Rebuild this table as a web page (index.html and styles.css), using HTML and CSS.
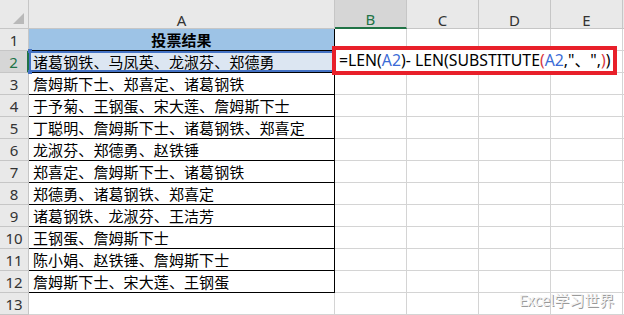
FILE: index.html
```html
<!DOCTYPE html>
<html lang="zh-CN">
<head>
<meta charset="utf-8">
<link rel="stylesheet" href="styles.css">
</head>
<body>
<div class="sheet">
  <div class="hd corner"><span class="tri"></span></div>
  <div class="hd col">A</div>
  <div class="hd col sel-col">B</div>
  <div class="hd col">C</div>
  <div class="hd col">D</div>
  <div class="hd col">E</div>
  <div class="hd col"></div>

  <div class="hd rn">1</div>
  <div class="c a title">投票结果</div>
  <div class="c"></div><div class="c"></div><div class="c"></div><div class="c"></div><div class="c"></div>

  <div class="hd rn sel-row">2</div>
  <div class="c a ref">诸葛钢铁、马凤英、龙淑芬、郑德勇<span class="h h1"></span><span class="h h2"></span></div>
  <div class="c active"></div><div class="c"></div><div class="c"></div><div class="c"></div><div class="c"></div>

  <div class="hd rn">3</div>
  <div class="c a">詹姆斯下士、郑喜定、诸葛钢铁</div>
  <div class="c"></div><div class="c"></div><div class="c"></div><div class="c"></div><div class="c"></div>

  <div class="hd rn">4</div>
  <div class="c a">于予菊、王钢蛋、宋大莲、詹姆斯下士</div>
  <div class="c"></div><div class="c"></div><div class="c"></div><div class="c"></div><div class="c"></div>

  <div class="hd rn">5</div>
  <div class="c a">丁聪明、詹姆斯下士、诸葛钢铁、郑喜定</div>
  <div class="c"></div><div class="c"></div><div class="c"></div><div class="c"></div><div class="c"></div>

  <div class="hd rn">6</div>
  <div class="c a">龙淑芬、郑德勇、赵铁锤</div>
  <div class="c"></div><div class="c"></div><div class="c"></div><div class="c"></div><div class="c"></div>

  <div class="hd rn">7</div>
  <div class="c a">郑喜定、詹姆斯下士、诸葛钢铁</div>
  <div class="c"></div><div class="c"></div><div class="c"></div><div class="c"></div><div class="c"></div>

  <div class="hd rn">8</div>
  <div class="c a">郑德勇、诸葛钢铁、郑喜定</div>
  <div class="c"></div><div class="c"></div><div class="c"></div><div class="c"></div><div class="c"></div>

  <div class="hd rn">9</div>
  <div class="c a">诸葛钢铁、龙淑芬、王洁芳</div>
  <div class="c"></div><div class="c"></div><div class="c"></div><div class="c"></div><div class="c"></div>

  <div class="hd rn">10</div>
  <div class="c a">王钢蛋、詹姆斯下士</div>
  <div class="c"></div><div class="c"></div><div class="c"></div><div class="c"></div><div class="c"></div>

  <div class="hd rn">11</div>
  <div class="c a">陈小娟、赵铁锤、詹姆斯下士</div>
  <div class="c"></div><div class="c"></div><div class="c"></div><div class="c"></div><div class="c"></div>

  <div class="hd rn">12</div>
  <div class="c a">詹姆斯下士、宋大莲、王钢蛋</div>
  <div class="c"></div><div class="c"></div><div class="c"></div><div class="c"></div><div class="c"></div>

  <div class="hd rn">13</div>
  <div class="c"></div>
  <div class="c"></div><div class="c"></div><div class="c"></div><div class="c"></div><div class="c"></div>
</div>

<div class="formula">=LEN(<span class="ref-b">A2</span>)- LEN(SUBSTITUTE<span class="p2">(</span><span class="ref-b">A2</span>,"、",<span class="p2">)</span>)</div>

<div class="watermark">Excel学习世界</div>
</body>
</html>
```

FILE: styles.css
```css
html, body {
  margin: 0;
  padding: 0;
  background: #ffffff;
  overflow: hidden;
}
body {
  width: 624px;
  height: 315px;
  position: relative;
  font-family: "Noto Sans CJK SC", "Noto Sans", sans-serif;
}
.sheet {
  display: grid;
  grid-template-columns: 29px 306px 72px 72px 72px 72px 20px;
  grid-template-rows: 29px repeat(13, 22px);
}
.hd, .c {
  box-sizing: border-box;
  border-right: 1px solid #d4d4d4;
  border-bottom: 1px solid #d4d4d4;
}
.hd {
  background: #e9e9e9;
  color: #333;
  font-family: "Noto Sans", "DejaVu Sans", sans-serif;
  font-size: 15px;
  display: flex;
  align-items: flex-end;
  justify-content: center;
  border-color: #c6c6c6;
}
.col {
  line-height: 16px;
  padding-bottom: 0;
}
.rn {
  line-height: 20px;
  padding-bottom: 0;
}
.corner {
  position: relative;
}
.tri {
  position: absolute;
  right: 4px;
  bottom: 4px;
  width: 0;
  height: 0;
  border-left: 11px solid transparent;
  border-bottom: 11px solid #b9b9b9;
}
.sel-col {
  background: #d6d6d6;
  border-bottom: 2px solid #217346;
  color: #217346;
}
.sel-row {
  background: #d6d6d6;
  border-right: 2px solid #217346;
  color: #217346;
}
.c {
  font-size: 15px;
  line-height: 21px;
  color: #000;
  white-space: nowrap;
  overflow: visible;
}
.a {
  border-right: 1px solid #000;
  border-bottom: 1px solid #000;
  padding-left: 4px;
  letter-spacing: 0.1px;
}
.title {
  background: #9dc3e6;
  font-weight: bold;
  text-align: center;
  padding-left: 0;
}
.ref {
  background: #dce6f2;
  position: relative;
  box-shadow: inset 0 2px 0 #4472c4, inset 0 -2px 0 #4472c4, inset 2px 0 0 #4472c4;
}
.h {
  position: absolute;
  width: 4px;
  height: 4px;
  background: #4472c4;
  left: -1px;
}
.h1 { top: -2px; }
.h2 { bottom: -2px; }
.active {
  border-bottom: 2px solid #217346;
}
.formula {
  position: absolute;
  left: 332px;
  top: 46px;
  width: 285px;
  height: 29px;
  box-sizing: border-box;
  border: 4px solid #e8202a;
  background: #ffffff;
  font-family: "Noto Sans", "Open Sans", "Noto Sans CJK SC", sans-serif;
  font-size: 15.8px;
  line-height: 21px;
  padding-left: 3px;
  color: #000;
  white-space: nowrap;
  overflow: hidden;
}
.ref-b { color: #3b6bd6; }
.p2 { color: #d9363e; }
.watermark {
  position: absolute;
  left: 519px;
  top: 289px;
  font-family: "Noto Sans CJK SC", sans-serif;
  font-size: 15px;
  color: #f2f2f2;
  text-shadow: 1px 1px 0 #9a9a9a;
}
```
